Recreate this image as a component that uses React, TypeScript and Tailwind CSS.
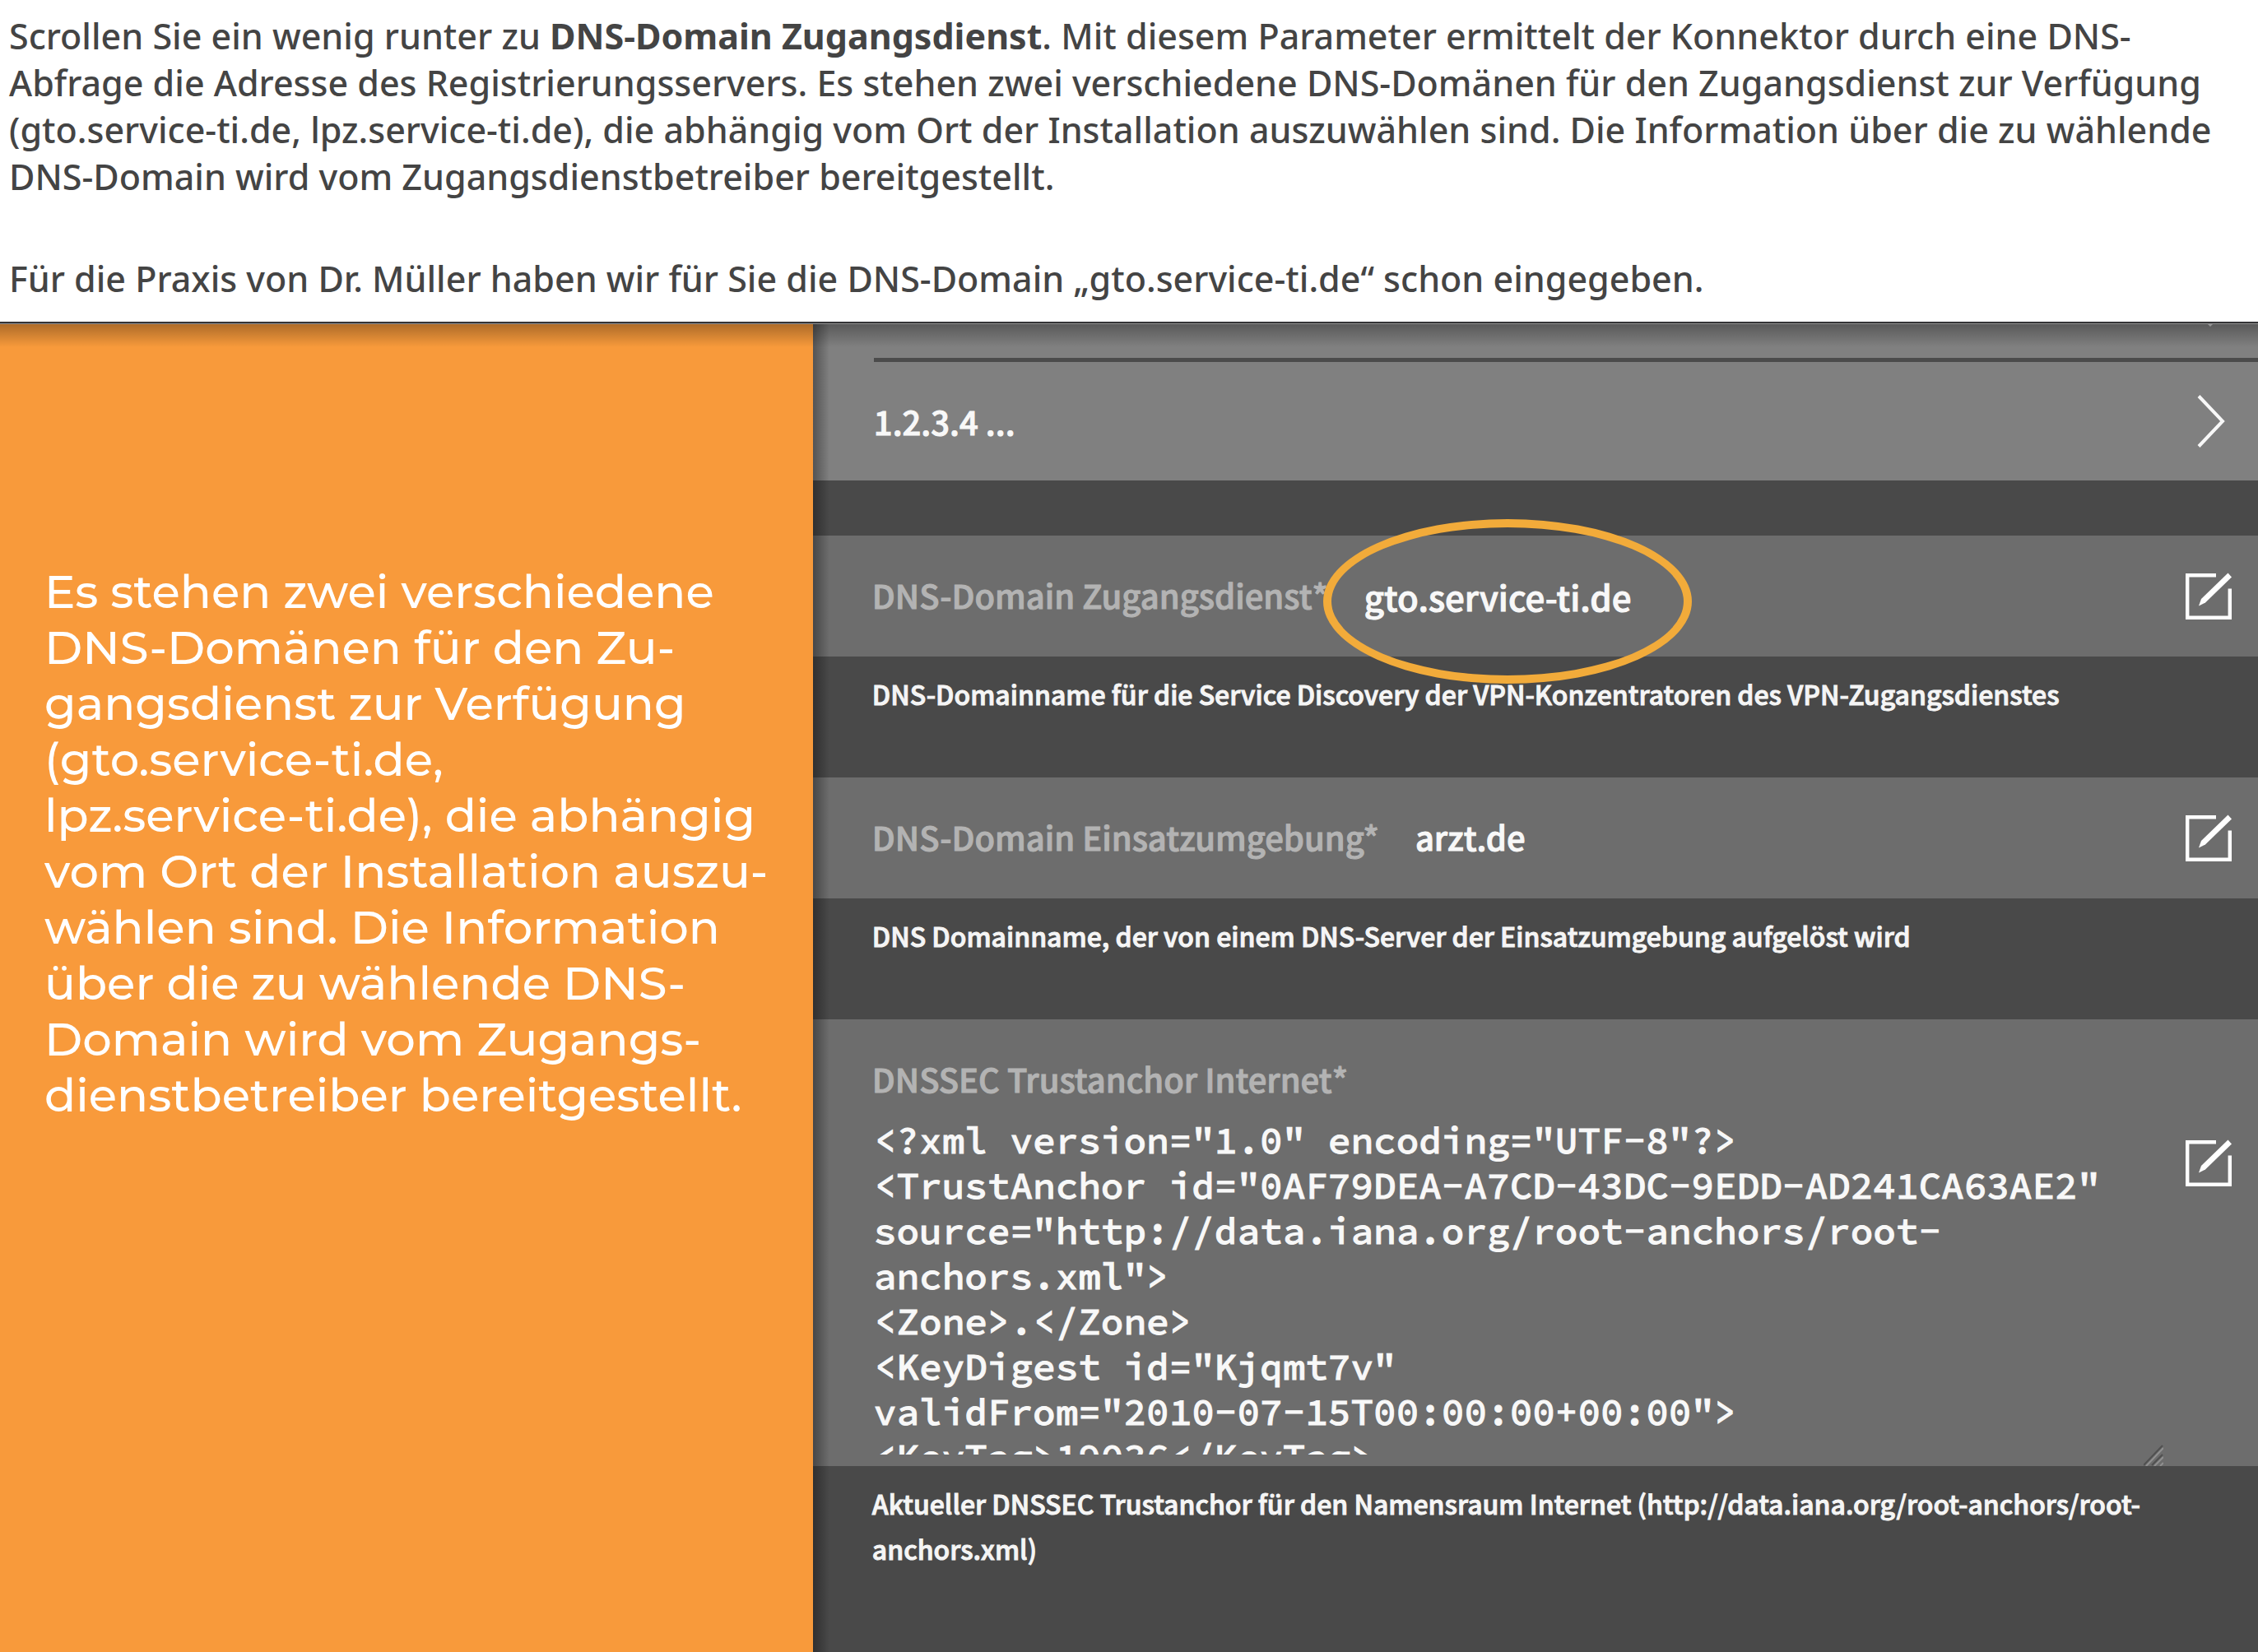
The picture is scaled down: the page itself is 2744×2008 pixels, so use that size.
import React from "react";

const XML = `<?xml version="1.0" encoding="UTF-8"?>
<TrustAnchor id="0AF79DEA-A7CD-43DC-9EDD-AD241CA63AE2" source="http://data.iana.org/root-anchors/root-anchors.xml">
<Zone>.</Zone>
<KeyDigest id="Kjqmt7v"
validFrom="2010-07-15T00:00:00+00:00">
<KeyTag>19036</KeyTag>`;

const NOTE_LINES = [
  "Es stehen zwei verschiedene",
  "DNS-Domänen für den Zu-",
  "gangsdienst zur Verfügung",
  "(gto.service-ti.de,",
  "lpz.service-ti.de), die abhängig",
  "vom Ort der Installation auszu-",
  "wählen sind. Die Information",
  "über die zu wählende DNS-",
  "Domain wird vom Zugangs-",
  "dienstbetreiber bereitgestellt.",
];

function EditButton({ label }: { label: string }) {
  return (
    <button type="button" aria-label={label} className="size-14 shrink-0 text-white">
      <svg viewBox="0 0 56 56" className="size-14 overflow-visible" fill="none">
        <path d="M37 2.2H2.2V53.8H53.8V18.500" stroke="currentColor" strokeWidth="4.400" />
        <path d="M51.500 -0.500L56 4.500L24 35.500L16 39.500L19 31Z" fill="currentColor" />
      </svg>
    </button>
  );
}

function Help({ children }: { children: React.ReactNode }) {
  return (
    <p className="min-h-[147px] px-[72px] py-[18px] text-[32px] leading-[55px] font-medium text-[#f5f5f5]">
      {children}
    </p>
  );
}

function Field({
  id,
  label,
  value,
  highlighted = false,
}: {
  id: string;
  label: string;
  value: string;
  highlighted?: boolean;
}) {
  return (
    <div className="flex h-[147px] items-center bg-[#6d6d6d] pr-8 pl-[72px] font-medium">
      <div id={id} className="pb-0.5 text-[40px] leading-[55px] text-[#b3b3b3]">
        {label}
      </div>
      {highlighted ? (
        <div aria-labelledby={id} className="relative ml-11 text-[42px] leading-[60px] text-[#f8f8f8]">
          {value}
          <span className="absolute -top-16 -left-[50px] h-[200px] w-[448px] rounded-[50%] border-[10px] border-[#f2ab3a]" />
        </div>
      ) : (
        <div aria-labelledby={id} className="ml-11 pb-0.5 text-[40px] leading-[55px] text-[#f8f8f8]">
          {value}
        </div>
      )}
      <div className="flex-1" />
      <EditButton label={`${label} bearbeiten`} />
    </div>
  );
}

export default function App() {
  return (
    <div className="flex min-h-screen flex-col bg-white">
      <header className="pt-[15px] pr-8 pb-6 pl-[11px] font-['Noto_Sans',sans-serif] text-[43px] leading-[57px] font-medium text-[#444]">
        <p>
          Scrollen Sie ein wenig runter zu <strong className="font-bold">DNS-Domain Zugangsdienst</strong>. Mit
          diesem Parameter ermittelt der Konnektor durch eine DNS-
          <wbr />
          Abfrage die Adresse des Registrierungsservers. Es stehen zwei verschiedene DNS-Domänen für den Zugangsdienst
          zur Verfügung (gto.service-ti.de, lpz.service-ti.de), die abhängig vom Ort der Installation auszuwählen sind.
          Die Information über die zu wählende DNS-Domain wird vom Zugangsdienstbetreiber bereitgestellt.
        </p>
        <p className="mt-[67px]">
          Für die Praxis von Dr. Müller haben wir für Sie die DNS-Domain „gto.service-ti.de“ schon eingegeben.
        </p>
      </header>

      <div className="h-0.5 bg-[#343436]" />
      <div className="h-px bg-[#8f8f8f]" />

      <main className="relative flex flex-1">
        <aside className="w-[36%] shrink-0 bg-[#f89a3b] pt-[291px] pl-[54px] font-['Montserrat','DejaVu_Sans',sans-serif] text-[56px] leading-[68px] font-medium text-white">
          <p>
            {NOTE_LINES.map((line) => (
              <span key={line} className="block whitespace-nowrap">
                {line}
              </span>
            ))}
          </p>
        </aside>

        <section className="relative min-w-0 flex-1 bg-[#494949] font-['Noto_Sans_CJK_SC',sans-serif] [-webkit-text-stroke:1px_currentColor]">
          <div className="bg-[#808080]">
            <div className="flex h-[41px] items-start justify-end pr-[55px]">
              <svg viewBox="0 0 6 3" className="h-[3px] w-1.5" aria-hidden="true">
                <path d="M0 0H6L3 3Z" fill="#d0d0d0" />
              </svg>
            </div>
            <div className="ml-[74px] h-[5px] bg-[#4b4b4b]" />
            <button
              type="button"
              className="flex h-36 w-full items-center justify-between pr-10 pl-[74px] text-left text-[40px] leading-[55px] font-medium text-[#f8f8f8]"
            >
              1.2.3.4 ...
              <svg viewBox="0 0 34 64" className="h-16 w-[34px]" fill="none" aria-hidden="true">
                <path d="M2 1.500L31 32L2 62.500" stroke="currentColor" strokeWidth="4" />
              </svg>
            </button>
          </div>

          <div className="h-[67px]" />

          <Field id="zugangsdienst" label="DNS-Domain Zugangsdienst*" value="gto.service-ti.de" highlighted />
          <Help>DNS-Domainname für die Service Discovery der VPN-Konzentratoren des VPN-Zugangsdienstes</Help>

          <Field id="einsatzumgebung" label="DNS-Domain Einsatzumgebung*" value="arzt.de" />
          <Help>DNS Domainname, der von einem DNS-Server der Einsatzumgebung aufgelöst wird</Help>

          <div className="flex bg-[#6d6d6d] pr-8 pl-[72px]">
            <div className="min-w-0 flex-1 pt-[45px]">
              <label
                htmlFor="trustanchor"
                className="block text-[40px] leading-[55px] font-medium text-[#b3b3b3]"
              >
                DNSSEC Trustanchor Internet*
              </label>
              <textarea
                id="trustanchor"
                readOnly
                value={XML}
                className="mt-5 block h-[409px] w-full resize-none overflow-hidden bg-transparent pl-0.5 font-['Source_Code_Pro','DejaVu_Sans_Mono',monospace] text-[46px] leading-[55px] font-medium text-[#f8f8f8] outline-none"
              />
              <div className="flex h-3.5 items-end justify-end">
                <svg viewBox="0 0 24 26" className="h-[26px] w-6 shrink-0" fill="none" aria-hidden="true">
                  <path d="M0 25L23 1M10 25L23 12" stroke="#505050" strokeWidth="2" />
                  <path d="M3 26L24 4M13 26L24 15M20 26L24 22" stroke="#909090" strokeWidth="2" />
                </svg>
              </div>
            </div>
            <div className="ml-[27px] pt-[147px]">
              <EditButton label="DNSSEC Trustanchor Internet bearbeiten" />
            </div>
          </div>
          <Help>
            Aktueller DNSSEC Trustanchor für den Namensraum Internet (http://data.iana.org/root-anchors/root-
            <wbr />
            anchors.xml)
          </Help>

          <div className="pointer-events-none absolute inset-y-0 left-0 w-5 bg-linear-to-r from-black/35 to-transparent" />
        </section>

        <div className="pointer-events-none absolute inset-x-0 top-0 h-7 bg-linear-to-b from-black/30 to-transparent" />
      </main>
    </div>
  );
}
